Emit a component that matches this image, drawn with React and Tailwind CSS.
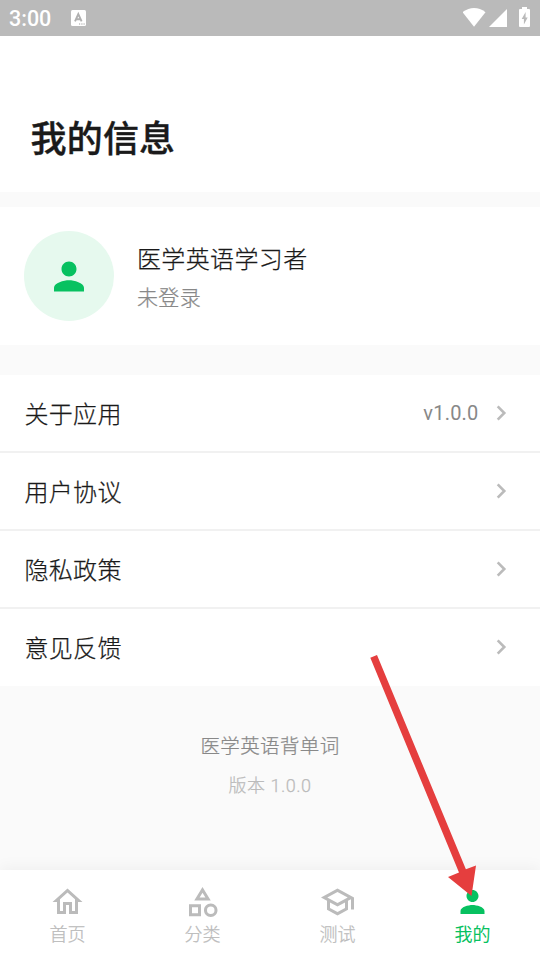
import { MdOutlineCategory, MdOutlineHome, MdOutlineSchool, MdPerson } from "react-icons/md";
import clsx from "clsx";

const menuItems = [
  { label: "关于应用", value: "v1.0.0" },
  { label: "用户协议" },
  { label: "隐私政策" },
  { label: "意见反馈" },
];

const tabs = [
  { label: "首页", icon: MdOutlineHome },
  { label: "分类", icon: MdOutlineCategory },
  { label: "测试", icon: MdOutlineSchool },
  { label: "我的", icon: MdPerson, active: true },
];

const StatusBar = () => (
  <div className="flex h-9 shrink-0 items-center bg-[#bababa] pl-[9px] text-white">
    <span className="mt-[2px] text-[21.5px] leading-none font-medium">3:00</span>
    <svg viewBox="0 0 15 16" className="ml-[20px] h-4 w-[15px]">
      <rect width="15" height="16" rx="1.5" fill="#fff" />
      <path d="M4 11.4 7.3 4l3.3 7.4M5.2 9.2h4.2" fill="none" stroke="#b0b0b0" strokeWidth="1.9" />
      <path d="M8 14h1.2M10.3 14h1.2M12.5 14h1.2" stroke="#a0a0a0" strokeWidth="1.2" />
    </svg>
    {/* wifi, signal, charging battery */}
    <svg viewBox="0 0 77 24" className="ml-auto h-6 w-[77px]" fill="#fff">
      <path d="M-.5 6.2Q5 2 11 2t11.5 4.2L11 20.7z" />
      <path d="M44 3v18H26z" />
      <path
        fillRule="evenodd"
        d="M59 1h5v2h2q1 0 1 1v16q0 1-1 1h-9q-1 0-1-1V4q0-1 1-1h2zM62.6 6l-3.9 7h2.2v5.5l3.8-7h-2.1z"
      />
    </svg>
  </div>
);

const Chevron = ({ className }) => (
  <svg viewBox="0 0 30 30" className={clsx("size-[30px] shrink-0", className)}>
    <path d="m11.7 8.3 6.6 6.7-6.6 6.7" fill="none" stroke="#bbbbbb" strokeWidth="2.6" />
  </svg>
);

const ProfileCard = () => (
  <section className="mt-[15px] flex h-[138px] shrink-0 items-center bg-white px-6">
    <div className="flex size-[90px] items-center justify-center rounded-full bg-[#e6f9ee]">
      <MdPerson className="size-[45px] -translate-x-[0.5px] text-[#07c160]" />
    </div>
    <div className="ml-[23px] pt-[4px]">
      <p className="text-[24px] leading-[36px] font-light tracking-[0.375px] text-[#1a1a1a] [-webkit-text-stroke:0.25px]">
        医学英语学习者
      </p>
      <p className="mt-[4px] text-[21px] leading-[32px] font-light tracking-[0.375px] text-[#888888] [-webkit-text-stroke:0.25px]">
        未登录
      </p>
    </div>
  </section>
);

const MenuRow = ({ label, value, last }) => (
  <li
    className={clsx(
      "flex items-center pr-6 pl-[24.5px]",
      last ? "h-[77px] pb-px" : "h-[78px] border-b-2 border-[#f1f1f1]"
    )}
  >
    <span className="pt-1 text-[24px] leading-[36px] font-light tracking-[0.3px] text-[#1a1a1a] [-webkit-text-stroke:0.25px]">
      {label}
    </span>
    {value && (
      <span className="ml-auto text-[20px] leading-8 tracking-[0.2px] text-[#888888]">
        {value}
      </span>
    )}
    <Chevron className={value ? "ml-[7.5px]" : "ml-auto"} />
  </li>
);

const TabBar = () => (
  <nav className="z-10 grid h-[90px] shrink-0 grid-cols-4 bg-white shadow-[0_-2px_15px_rgba(0,0,0,0.05)]">
    {tabs.map(({ label, icon: Icon, active }) => (
      <div
        key={label}
        className={clsx(
          "flex flex-col items-center pt-[14px]",
          active ? "text-[#07c160]" : "text-[#bbbbbb]"
        )}
      >
        <Icon className="size-9 -translate-x-[0.5px]" />
        <span
          className={clsx(
            "mt-[2px] text-[18px] leading-[26px]",
            active ? "font-normal" : "font-light [-webkit-text-stroke:0.25px]"
          )}
        >
          {label}
        </span>
      </div>
    ))}
  </nav>
);

const App = () => {
  return (
    <div className="relative flex h-[960px] w-[540px] flex-col overflow-hidden bg-[#fafafa] font-[Roboto,'Noto_Sans_CJK_SC',sans-serif]">
      <StatusBar />

      <header className="h-[156px] shrink-0 bg-white pt-[77px] pl-[30.5px]">
        <h1 className="text-[36px] leading-[54px] font-medium tracking-[0.2px] text-[#1a1a1a] [-webkit-text-stroke:0.4px]">
          我的信息
        </h1>
      </header>

      <ProfileCard />

      <ul className="mt-[30px] shrink-0 bg-white">
        {menuItems.map((item, index) => (
          <MenuRow key={item.label} {...item} last={index === menuItems.length - 1} />
        ))}
      </ul>

      <footer className="flex flex-1 flex-col items-center pt-[46px]">
        <p className="text-[19.5px] leading-[30px] font-light tracking-[0.375px] text-[#888888] [-webkit-text-stroke:0.25px]">
          医学英语背单词
        </p>
        <p className="mt-[10px] text-[18px] leading-[27px] font-light tracking-[0.5px] text-[#bbbbbb] [-webkit-text-stroke:0.25px]">
          版本 1.0.0
        </p>
      </footer>

      <TabBar />

      {/* pointer to the active tab */}
      <svg
        viewBox="0 0 106 242"
        className="absolute top-[655px] left-[370px] z-20 h-[242px] w-[106px]"
        fill="#e53e3e"
      >
        <path d="M.3 2.7 7 0 95.9 214.3 106 210.5 101.5 241 78 222 89 217.5z" />
      </svg>
    </div>
  );
};

export default App;
